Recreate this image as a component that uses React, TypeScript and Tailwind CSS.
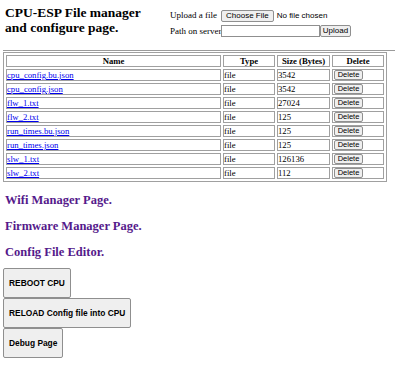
const files = [
  { name: 'cpu_config.bu.json', size: 3542 },
  { name: 'cpu_config.json', size: 3542 },
  { name: 'flw_1.txt', size: 27024 },
  { name: 'flw_2.txt', size: 125 },
  { name: 'run_times.bu.json', size: 125 },
  { name: 'run_times.json', size: 125 },
  { name: 'slw_1.txt', size: 126136 },
  { name: 'slw_2.txt', size: 112 },
];

const serif = "font-['Liberation_Serif',serif]";
const sans = "font-['Liberation_Sans',Arial,sans-serif]";

export default function App() {
  return (
    <div className={`${serif} h-[372px] w-[398px] overflow-hidden bg-white text-black`}>
      <div className="flex items-start pt-[5px]">
        <h2 className="mr-[15px] ml-[5px] w-[150px] text-[13.5px] leading-[15px] font-bold">
          CPU-ESP File manager and configure page.
        </h2>
        <form className="mt-[4px] grid grid-cols-[51px_auto] items-center gap-y-[2px] text-[9px] whitespace-nowrap">
          <span>Upload a file</span>
          <span className={`${sans} flex items-center gap-[3px] text-[8px]`}>
            <button
              type="button"
              className="h-[12px] rounded-[2px] border border-[#8f8f8f] bg-[#efefef] px-[4px] leading-[10px]"
            >
              Choose File
            </button>
            No file chosen
          </span>
          <span>Path on server</span>
          <span className="flex items-center">
            <input className="h-[12px] w-[99px] border border-[#8f8f8f]" />
            <button
              type="button"
              className={`${sans} h-[12px] w-[31px] rounded-[2px] border border-[#8f8f8f] bg-[#efefef] text-[8px] leading-[10px]`}
            >
              Upload
            </button>
          </span>
        </form>
      </div>
      <hr className="mx-[3px] mt-[12px] mb-[1px] border-t border-[#9a9a9a]" />
      <table className="ml-[3px] w-[384px] border-separate border-spacing-[2px] border border-[#a0a0a0] text-[8.7px]">
        <thead>
          <tr>
            {['Name', 'Type', 'Size (Bytes)', 'Delete'].map((h) => (
              <th key={h} className="h-[12px] border border-[#a0a0a0] p-0 leading-[10px] font-bold">
                {h}
              </th>
            ))}
          </tr>
        </thead>
        <tbody>
          {files.map((f) => (
            <tr key={f.name}>
              <td className="h-[12px] w-[215px] border border-[#a0a0a0] p-0 leading-[10px]">
                <a href="#" className="text-[#0000ee] underline">
                  {f.name}
                </a>
              </td>
              <td className="w-[52px] border border-[#a0a0a0] p-0 leading-[10px]">file</td>
              <td className="w-[53px] border border-[#a0a0a0] p-0 leading-[10px]">{f.size}</td>
              <td className="border border-[#a0a0a0] p-0 pl-[1px] leading-[10px]">
                <button
                  type="button"
                  className={`${sans} block h-[10px] w-[29px] rounded-[2px] border border-[#8f8f8f] bg-[#efefef] text-[7.5px] leading-[8px]`}
                >
                  Delete
                </button>
              </td>
            </tr>
          ))}
        </tbody>
      </table>
      <div className="mt-[10px] ml-[5px] flex flex-col gap-[10px] text-[12.5px] leading-[16px] font-bold text-[#551a8b]">
        <a href="#" className="w-fit">Wifi Manager Page.</a>
        <a href="#" className="w-fit">Firmware Manager Page.</a>
        <a href="#" className="w-fit">Config File Editor.</a>
      </div>
      <div className={`${sans} mt-[8px] ml-[3px] flex flex-col items-start text-[8.4px] font-bold`}>
        {['REBOOT CPU', 'RELOAD Config file into CPU', 'Debug Page'].map((b) => (
          <button
            key={b}
            type="button"
            className="h-[30px] rounded-[2px] border border-[#8f8f8f] bg-[#efefef] px-[5px]"
          >
            {b}
          </button>
        ))}
      </div>
    </div>
  );
}
